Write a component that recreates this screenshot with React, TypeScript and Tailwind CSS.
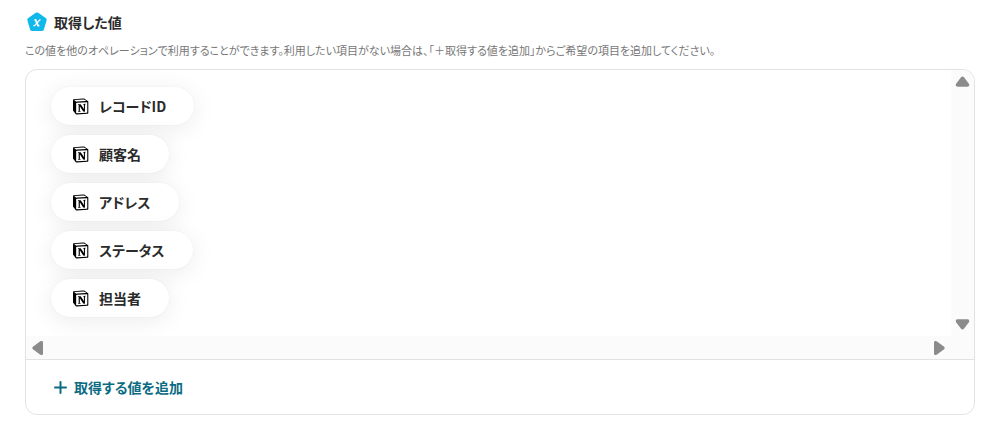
const values = ["レコードID", "顧客名", "アドレス", "ステータス", "担当者"];

const arrowPaths = {
  up: "M6.2 1.2Q8 -0.8 9.8 1.2L14.8 8Q16 11 13 11H3Q0 11 1.2 8Z",
  down: "M6.2 9.8Q8 11.8 9.8 9.8L14.8 3Q16 0 13 0H3Q0 0 1.2 3Z",
  left: "M1.2 5.5Q-0.6 7 1.2 8.5L8 13.6Q11 15 11 12.2V1.8Q11 -1 8 0.4Z",
  right: "M9.8 5.5Q11.6 7 9.8 8.5L3 13.6Q0 15 0 12.2V1.8Q0 -1 3 0.4Z",
};

const ScrollArrow = ({ direction, label }: { direction: keyof typeof arrowPaths; label: string }) => {
  const vertical = direction === "up" || direction === "down";

  return (
    <button type="button" aria-label={label} className="text-[#8b8b8b]">
      <svg
        width={vertical ? 15 : 11}
        height={vertical ? 11 : 14}
        viewBox={vertical ? "0 0 16 11" : "0 0 11 14"}
        fill="currentColor"
      >
        <path d={arrowPaths[direction]} />
      </svg>
    </button>
  );
};

const ValueIcon = () => (
  <svg width="20" height="20" viewBox="0 0 20 20" fill="none" aria-hidden="true">
    <path
      d="M8.7 0.8Q10 0 11.3 0.8L19 6.3Q20 7.1 19.6 8.4L16.9 17.4Q16.4 19 14.8 19H5.2Q3.6 19 3.1 17.4L0.4 8.4Q0 7.1 1 6.3Z"
      fill="#11b9ea"
    />
    <path d="M7.4 7.9H8.6L11 13.6H12.4" stroke="#fff" strokeWidth="1.8" strokeLinejoin="round" />
    <path d="M13.6 7.9H12.8L7.6 13.6H6.4" stroke="#fff" strokeWidth="1.3" strokeLinejoin="round" />
  </svg>
);

const NotionIcon = () => (
  <svg width="16" height="17" viewBox="0 0 100 100" aria-hidden="true">
    <path
      d="M6.017 4.313l55.333-4.087c6.797-.583 8.543-.19 12.817 2.917l17.663 12.443c2.913 2.14 3.883 2.723 3.883 5.053v68.243c0 4.277-1.553 6.807-6.99 7.193L24.467 99.967c-4.08.193-6.023-.39-8.16-3.113L3.3 79.94C.967 76.827 0 74.497 0 71.773V11.113c0-3.497 1.553-6.413 6.017-6.8z"
      fill="#fff"
    />
    <path
      fillRule="evenodd"
      d="M61.35.227l-55.333 4.087C1.553 4.7 0 7.617 0 11.113v60.66c0 2.724.967 5.053 3.3 8.167l13.007 16.913c2.137 2.723 4.08 3.307 8.16 3.113l64.257-3.89c5.433-.387 6.99-2.917 6.99-7.193V20.64c0-2.21-.873-2.847-3.443-4.733L74.167 3.143C69.893.036 68.147-.357 61.35.227zM25.92 19.523c-5.247.353-6.437.433-9.417-1.99L8.927 11.507c-.77-.78-.383-1.753 1.557-1.947l53.193-3.887c4.467-.39 6.793 1.167 8.54 2.527l9.123 6.61c.39.197 1.36 1.36.193 1.36l-54.933 3.307-.68.047zM19.803 88.3V30.367c0-2.53.777-3.697 3.103-3.893L86 22.78c2.14-.193 3.107 1.167 3.107 3.693v57.547c0 2.53-.39 4.67-3.883 4.863l-60.377 3.5c-3.493.193-5.043-.97-5.043-4.083zm59.6-54.827c.387 1.75 0 3.5-1.75 3.7l-2.91.577v42.773c-2.527 1.36-4.853 2.137-6.797 2.137-3.107 0-3.883-.973-6.21-3.887l-19.03-29.94v28.967l6.02 1.363s0 3.5-4.857 3.5l-13.39.777c-.39-.78 0-2.723 1.357-3.11l3.497-.97v-38.3L30.48 40.667c-.39-1.75.58-4.277 3.3-4.473l14.367-.967 19.8 30.327v-26.83l-5.047-.58c-.39-2.143 1.163-3.7 3.103-3.89l13.4-.78z"
    />
  </svg>
);

const App = () => {
  return (
    <main className="bg-white px-[25px] pt-3 pb-6 font-['Noto_Sans_CJK_JP',sans-serif] text-[#2b2b2b] [font-feature-settings:'palt']">
      <header>
        <div className="flex items-center gap-[7px] pl-0.5">
          <ValueIcon />
          <h2 className="text-sm leading-5 font-bold">取得した値</h2>
        </div>
        <p className="mt-2 text-[11px] leading-[21px] text-[#777]">
          この値を他のオペレーションで利用することができます。利用したい項目がない場合は、「＋取得する値を追加」からご希望の項目を追加してください。
        </p>
      </header>

      <section className="mt-2 overflow-hidden rounded-xl border border-[#e2e2e2]">
        <div className="grid grid-cols-[1fr_23px] border-b border-[#e2e2e2]">
          <ul className="flex flex-col items-start gap-2.5 overflow-hidden px-[25px] pt-[17px] pb-[19px]">
            {values.map((value) => (
              <li key={value}>
                <button
                  type="button"
                  className="flex h-[38px] items-center gap-2.5 rounded-full bg-white pr-7 pl-[22px] text-sm font-bold shadow-[0_0_2px_rgba(0,0,0,0.06),0_4px_24px_rgba(0,0,0,0.08)]"
                >
                  <NotionIcon />
                  {value}
                </button>
              </li>
            ))}
          </ul>
          <div className="flex flex-col items-center justify-between bg-[#fbfbfb] py-1.5">
            <ScrollArrow direction="up" label="上へスクロール" />
            <ScrollArrow direction="down" label="下へスクロール" />
          </div>
          <div className="flex h-[23px] items-center justify-between bg-[#fbfbfb] px-1.5">
            <ScrollArrow direction="left" label="左へスクロール" />
            <ScrollArrow direction="right" label="右へスクロール" />
          </div>
          <div className="bg-[#fbfbfb]" />
        </div>

        <button
          type="button"
          className="flex h-[54px] items-center gap-[7px] px-7 text-sm font-bold text-[#0b6b83]"
        >
          <svg width="13" height="13" viewBox="0 0 13 13" stroke="currentColor" strokeWidth="2" strokeLinecap="round" aria-hidden="true">
            <path d="M6.5 1V12M1 6.5H12" />
          </svg>
          取得する値を追加
        </button>
      </section>
    </main>
  );
};

export default App;
